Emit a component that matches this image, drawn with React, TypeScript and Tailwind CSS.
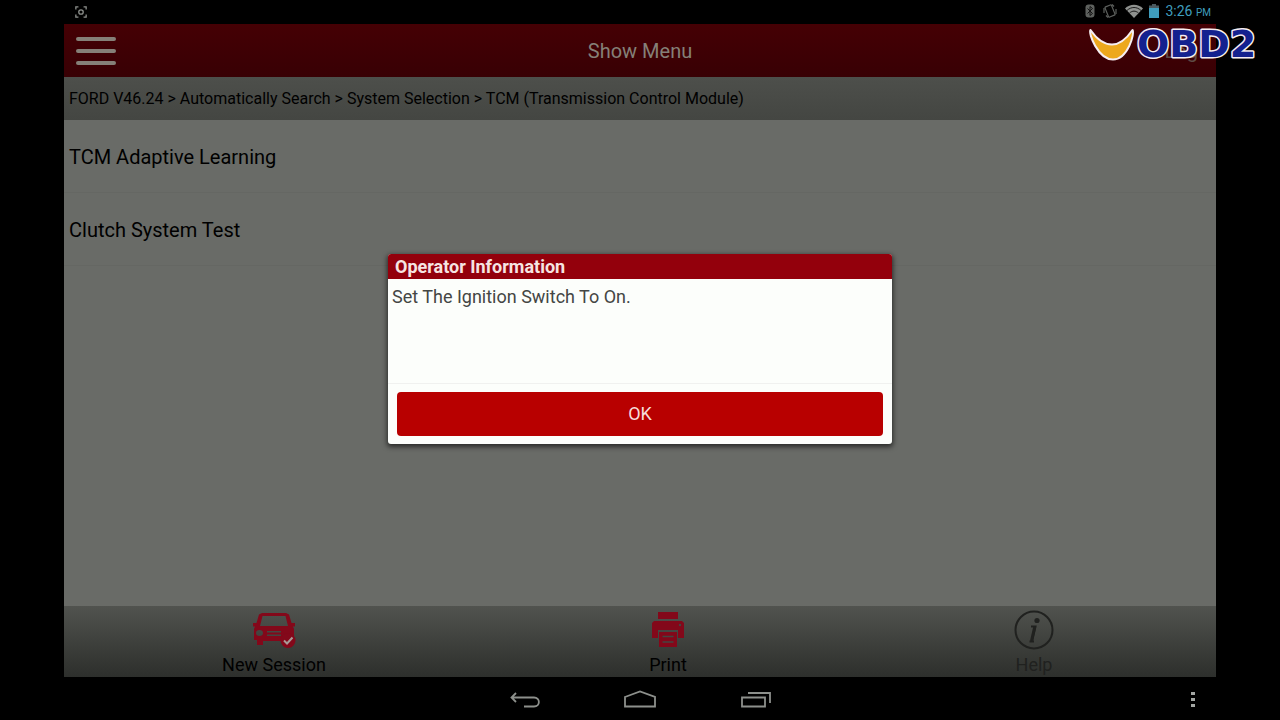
import type { ReactNode } from "react";

const crumbs = [
  "FORD V46.24",
  "Automatically Search",
  "System Selection",
  "TCM (Transmission Control Module)",
];

const menuItems = ["TCM Adaptive Learning", "Clutch System Test"];

function StatusBar() {
  return (
    <div className="flex h-6 items-center justify-between bg-black px-[5px]">
      <svg viewBox="0 0 14 14" className="ml-1.5 size-3" fill="none" stroke="#8d908c" strokeWidth="1.5">
        <path d="M1 4V1h3M10 1h3v3M13 10v3h-3M4 13H1v-3" />
        <circle cx="7" cy="7" r="2.6" />
      </svg>
      <div className="flex items-center gap-1.5 pb-0.5">
        <svg viewBox="0 0 10 14" className="h-3.5 w-2.5" fill="none">
          <rect x="0.5" y="0.5" width="9" height="13" rx="3" fill="#5e615e" />
          <path d="M2.5 4.5l5 5L5 11.5V2.5l2.5 2-5 5" stroke="#111" strokeWidth="1" />
        </svg>
        <svg viewBox="0 0 14 14" className="mx-0.5 size-3.5" fill="none" stroke="#5e615e" strokeWidth="1.2">
          <rect x="3.5" y="1.5" width="7" height="11" rx="1" transform="rotate(-22 7 7)" />
          <path d="M1 4v5M3 11.5l2 2M13 10V5M11 2.5L9 .5" />
        </svg>
        <svg viewBox="0 0 18 14" className="h-3.5 w-[18px]">
          <path d="M0 4.5C5-.5 13-.5 18 4.5L9 14z" fill="#8f928f" />
          <path d="M2 6.5c4-4 10-4 14 0M4.5 9c3-2.5 6-2.5 9 0" fill="none" stroke="#1b1b1b" strokeWidth="1" />
        </svg>
        <svg viewBox="0 0 10 14" className="h-3.5 w-2.5">
          <path d="M3 0h4v1.5h3V4H0V1.5h3z" fill="#4a5a60" />
          <path d="M0 4h10v10H0z" fill="#3f9dbd" />
        </svg>
        <span className="text-sm text-[#3f9dbd]">
          3:26 <span className="text-[10px]">PM</span>
        </span>
      </div>
    </div>
  );
}

function Logo() {
  return (
    <svg viewBox="0 0 172 40" className="absolute top-6 right-5 h-10 w-[172px]" role="img" aria-label="OBD2">
      <path
        d="M2.5 6C8 14 16 20.5 24 20.5S39 14 44.5 6C47 9 40 35.5 25 35.5S0 9 2.5 6z"
        fill="#eda81d"
        stroke="#f6eef2"
        strokeWidth="2"
        strokeLinejoin="round"
      />
      <text
        x="49"
        y="33"
        fontFamily="DejaVu Sans, sans-serif"
        fontSize="38"
        fontWeight="700"
        fill="#14218f"
        stroke="#f6eef2"
        strokeWidth="3"
        strokeLinejoin="round"
        paintOrder="stroke"
      >
        OBD2
      </text>
    </svg>
  );
}

function CarIcon() {
  return (
    <svg viewBox="0 0 44 36" className="h-9 w-11">
      <path
        fill="#83081a"
        fillRule="evenodd"
        d="M10 1h24l3 1.5L39.5 11H43v3.5h-2l1 2.5v11h-3v5h-6v-4H11v4H5v-5H2V17l1-2.5H1V11h3.5L7 2.5zM10.5 4L8 14h28L33.5 4zM7.5 18a3.5 3 0 1 0 0 6 3.5 3 0 0 0 0-6zM15 19v1.5h14V19zM15 22.5V24h14v-1.5z"
      />
      <circle cx="36" cy="28.5" r="7.5" fill="#83081a" />
      <path d="M32 28.5l3 3 5.5-6" fill="none" stroke="#a79b98" strokeWidth="2" />
    </svg>
  );
}

function PrinterIcon() {
  return (
    <svg viewBox="0 0 36 36" className="size-9">
      <path d="M8 0h20v7H8zM4 9h28l2 2v15h-6v-8H8v8H2V11z" fill="#83081a" />
      <path d="M9 20h18v15H9z" fill="#83081a" />
      <path d="M12.5 24.5h11M12.5 30h11" stroke="#454441" strokeWidth="1.5" />
      <circle cx="30" cy="13" r="1.2" fill="#454441" />
    </svg>
  );
}

function InfoIcon() {
  return (
    <svg viewBox="0 0 40 40" className="size-10" fill="none" stroke="#20211f">
      <circle cx="20" cy="20" r="18.5" strokeWidth="2" />
      <circle cx="23" cy="10.5" r="2.6" fill="#20211f" stroke="none" />
      <path d="M17 16.5h4.5L18 31.5M15.5 31.5h4.5" strokeWidth="2" />
      <path d="M20.8 16.5L17.5 31" strokeWidth="3" />
    </svg>
  );
}

function ToolbarButton({ icon, label, faded }: { icon: ReactNode; label: string; faded?: boolean }) {
  return (
    <button type="button" className="flex flex-col items-center justify-between pt-1">
      <span className="flex h-10 items-center">{icon}</span>
      <span className={faded ? "text-lg/6 text-[#20211f]" : "text-lg/6 text-black"}>{label}</span>
    </button>
  );
}

function OperatorDialog() {
  return (
    <div className="absolute inset-0 flex items-center justify-center pb-1">
      <div
        role="dialog"
        aria-labelledby="dialog-title"
        className="w-full max-w-[504px] overflow-hidden rounded-[3px] bg-[#fcfefb] shadow-[0_2px_5px_1px_rgba(0,0,0,0.6)]"
      >
        <h2 id="dialog-title" className="bg-[#93000c] px-[7px] text-lg/[25px] font-bold text-[#f6e4e2]">
          Operator Information
        </h2>
        <p className="min-h-[105px] border-b border-[#f0f1ef] px-1 pt-1.5 text-lg/6 text-[#444644]">
          Set The Ignition Switch To On.
        </p>
        <div className="px-[9px] py-2">
          <button type="button" className="block h-11 w-full rounded bg-[#b80000] text-lg text-[#f6dcda]">
            OK
          </button>
        </div>
      </div>
    </div>
  );
}

function NavBar() {
  return (
    <nav className="grid h-[43px] grid-cols-[1fr_auto_1fr] items-center">
      <span />
      <div className="flex items-center gap-[84px]">
        <button type="button" aria-label="Back">
          <svg viewBox="0 0 32 18" className="h-[18px] w-8" fill="none" stroke="#8d908c" strokeWidth="1.8">
            <path d="M8 3L3.5 7.5 8 12M3.5 7.5H26c6.5 0 6.5 9 0 9H16" />
          </svg>
        </button>
        <button type="button" aria-label="Home">
          <svg viewBox="0 0 32 18" className="h-[18px] w-8" fill="none" stroke="#8d908c" strokeWidth="1.8">
            <path d="M1 7L16 1.5 31 7v9.5H1z" />
          </svg>
        </button>
        <button type="button" aria-label="Recent apps">
          <svg viewBox="0 0 32 18" className="h-[18px] w-8" fill="none" stroke="#8d908c" strokeWidth="1.8">
            <path d="M2 7.5h23v9H2zM8 3h22v10" />
          </svg>
        </button>
      </div>
      <button type="button" aria-label="More" className="mr-5 justify-self-end">
        <svg viewBox="0 0 6 16" className="h-4 w-1.5" fill="#a3a6a3">
          <path d="M1 1h4v3H1zM1 7h4v3H1zM1 13h4v3H1z" />
        </svg>
      </button>
    </nav>
  );
}

export default function App() {
  return (
    <div className="relative flex min-h-screen flex-col bg-black px-[5%] font-[Roboto,sans-serif]">
      <StatusBar />
      <div className="relative flex flex-1 flex-col bg-[#696b67]">
        <header className="grid h-[53px] grid-cols-3 items-center bg-linear-to-b from-[#450004] to-[#380004] px-3 text-xl text-[#858078]">
          <button type="button" aria-label="Menu" className="flex w-10 flex-col gap-2">
            <span className="h-1 rounded-full bg-[#858078]" />
            <span className="h-1 rounded-full bg-[#858078]" />
            <span className="h-1 rounded-full bg-[#858078]" />
          </button>
          <h1 className="text-center">Show Menu</h1>
          <button type="button" className="mr-1.5 justify-self-end text-[#5e4a45]">
            Log
          </button>
        </header>
        <div className="h-[43px] bg-linear-to-b from-[#4d4f4b] to-[#444642] px-[5px] text-base/[44px] text-black">
          {crumbs.join(" > ")}
        </div>
        <ul className="flex-1 text-xl text-black">
          {menuItems.map((item) => (
            <li key={item} className="flex h-[73px] items-center border-b border-[#656763] px-[5px] pt-0.5">
              {item}
            </li>
          ))}
        </ul>
        <footer className="grid h-[71px] grid-cols-[420fr_368fr_364fr] bg-linear-to-b from-[#51534f] to-[#2d2f2c]">
          <ToolbarButton icon={<CarIcon />} label="New Session" />
          <ToolbarButton icon={<PrinterIcon />} label="Print" />
          <ToolbarButton icon={<InfoIcon />} label="Help" faded />
        </footer>
        <OperatorDialog />
      </div>
      <NavBar />
      <Logo />
    </div>
  );
}
